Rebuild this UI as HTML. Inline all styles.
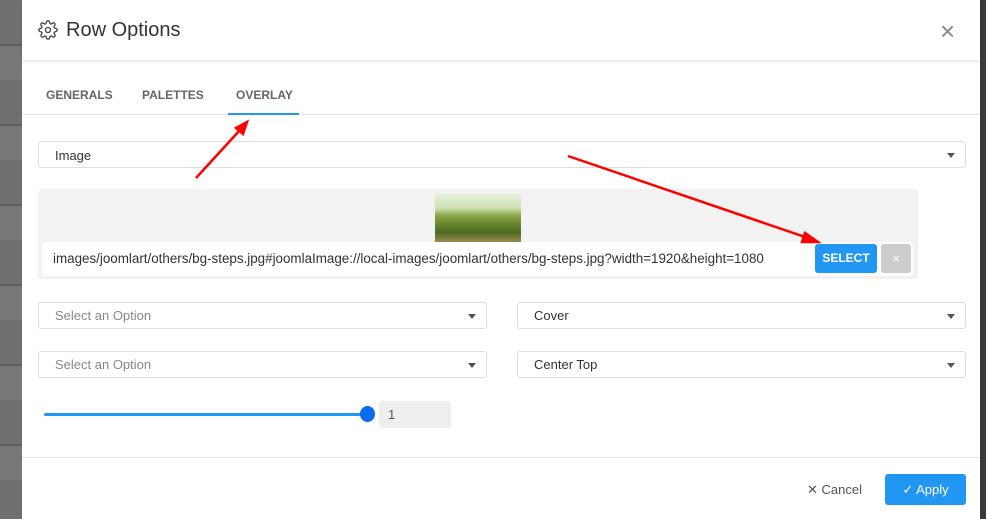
<!DOCTYPE html><html><head><style>
body{margin:0;width:986px;height:519px;overflow:hidden;background:#6e6e6e;font-family:"Liberation Sans",sans-serif;position:relative}
.a{position:absolute}
.sel{position:absolute;height:26px;border:1px solid #ddd;border-radius:3px;background:#fff;font-size:13px;color:#333;line-height:26px;padding-left:16px;box-sizing:border-box}
.sel:after{content:"";position:absolute;right:10px;top:11px;border:4px solid transparent;border-top:5px solid #555}
.g{color:#888}
</style></head><body>
<div class="a" style="left:0;top:0;width:22px;height:519px;background:repeating-linear-gradient(#707070 0 44px,#5e5e5e 44px 46px,#787878 46px 80px)"></div>
<div class="a" style="left:980px;top:0;width:6px;height:519px;background:#3a3a3a"></div>
<div class="a" style="left:22px;top:0;width:958px;height:519px;background:#fff">
<div class="a" style="left:0;top:0;width:958px;height:60px;box-shadow:0 2px 4px rgba(0,0,0,.1)">
<svg class="a" style="left:16px;top:20px" width="20" height="20" viewBox="0 0 24 24" fill="none" stroke="#444" stroke-width="1.6"><circle cx="12" cy="12" r="3"/><path d="M19.4 15a1.7 1.7 0 0 0 .3 1.8l.1.1a2 2 0 1 1-2.8 2.8l-.1-.1a1.7 1.7 0 0 0-1.8-.3 1.7 1.7 0 0 0-1 1.5V21a2 2 0 1 1-4 0v-.1a1.7 1.7 0 0 0-1.100-1.5 1.7 1.7 0 0 0-1.800.3l-.1.1a2 2 0 1 1-2.8-2.8l.1-.1a1.7 1.7 0 0 0 .3-1.8 1.7 1.7 0 0 0-1.5-1H3a2 2 0 1 1 0-4h.1a1.7 1.7 0 0 0 1.5-1.1 1.7 1.7 0 0 0-.3-1.8l-.1-.1a2 2 0 1 1 2.8-2.8l.1.1a1.7 1.7 0 0 0 1.8.3H9a1.7 1.7 0 0 0 1-1.5V3a2 2 0 1 1 4 0v.1a1.7 1.7 0 0 0 1 1.5 1.7 1.7 0 0 0 1.8-.3l.1-.1a2 2 0 1 1 2.8 2.8l-.1.1a1.7 1.7 0 0 0-.3 1.8V9a1.7 1.7 0 0 0 1.5 1H21a2 2 0 1 1 0 4h-.1a1.7 1.7 0 0 0-1.5 1z"/></svg>
<div class="a" style="left:44px;top:19px;font-size:20px;color:#333">Row Options</div>
<div class="a" style="left:918px;top:16px;font-size:26px;color:#888;font-weight:300">×</div>
</div>
<div class="a" style="left:24px;top:88px;font-size:12px;font-weight:bold;color:#666">GENERALS</div>
<div class="a" style="left:120px;top:88px;font-size:12px;font-weight:bold;color:#666">PALETTES</div>
<div class="a" style="left:214px;top:88px;font-size:12px;font-weight:bold;color:#666">OVERLAY</div>
<div class="a" style="left:0;top:114px;width:958px;height:1px;background:#e5e5e5"></div>
<div class="a" style="left:206px;top:113px;width:71px;height:2px;background:#2196f3"></div>
</div>
<div class="sel" style="left:38px;top:141px;width:928px;height:27px;line-height:27px">Image</div>
<div class="a" style="left:38px;top:189px;width:880px;height:90px;background:#f2f2f2;border-radius:4px"></div>
<div class="a" style="left:435px;top:194px;width:86px;height:48px;background:linear-gradient(#e6f0e0 0,#cfe0b0 30%,#8aa54a 45%,#6f8a30 60%,#4f6a22 80%,#9a8a50 100%)"></div>
<div class="a" style="left:42px;top:242px;width:871px;height:34px;background:#fff;border-radius:3px"></div>
<div class="a" style="left:53px;top:251px;font-size:13.4px;color:#333">images/joomlart/others/bg-steps.jpg#joomlaImage://local-images/joomlart/others/bg-steps.jpg?width=1920&amp;height=1080</div>
<div class="a" style="left:815px;top:244px;width:62px;height:29px;background:#2196f3;border-radius:3px;color:#fff;font-size:12px;font-weight:bold;text-align:center;line-height:29px">SELECT</div>
<div class="a" style="left:881px;top:244px;width:30px;height:29px;background:#ccc;border-radius:3px;color:#fff;font-size:13px;text-align:center;line-height:29px">×</div>
<div class="sel g" style="left:38px;top:302px;width:449px;height:27px">Select an Option</div>
<div class="sel" style="left:517px;top:302px;width:449px;height:27px">Cover</div>
<div class="sel g" style="left:38px;top:351px;width:449px;height:27px">Select an Option</div>
<div class="sel" style="left:517px;top:351px;width:449px;height:27px">Center Top</div>
<div class="a" style="left:44px;top:413px;width:323px;height:3px;background:#2196f3;border-radius:2px"></div>
<div class="a" style="left:360px;top:406px;width:15px;height:16px;background:#0a6cf0;border-radius:50%"></div>
<div class="a" style="left:379px;top:401px;width:72px;height:27px;background:#eee;border-radius:3px;font-size:13px;color:#555;line-height:27px;padding-left:9px;box-sizing:border-box">1</div>
<div class="a" style="left:22px;top:457px;width:958px;height:1px;background:#e5e5e5"></div>
<div class="a" style="left:807px;top:482px;font-size:13px;color:#555">✕ Cancel</div>
<div class="a" style="left:885px;top:474px;width:81px;height:31px;background:#2196f3;border-radius:3px;color:#fff;font-size:13px;text-align:center;line-height:31px">✓ Apply</div>
<svg class="a" style="left:0;top:0" width="986" height="519"><g stroke="#f00" stroke-width="2.5" fill="#f00"><line x1="196" y1="178" x2="240" y2="130"/><polygon points="247,122 236,128 243,134" /><line x1="568" y1="156" x2="808" y2="238"/><polygon points="818,242 805,233 802,242"/></g></svg>
</body></html>
